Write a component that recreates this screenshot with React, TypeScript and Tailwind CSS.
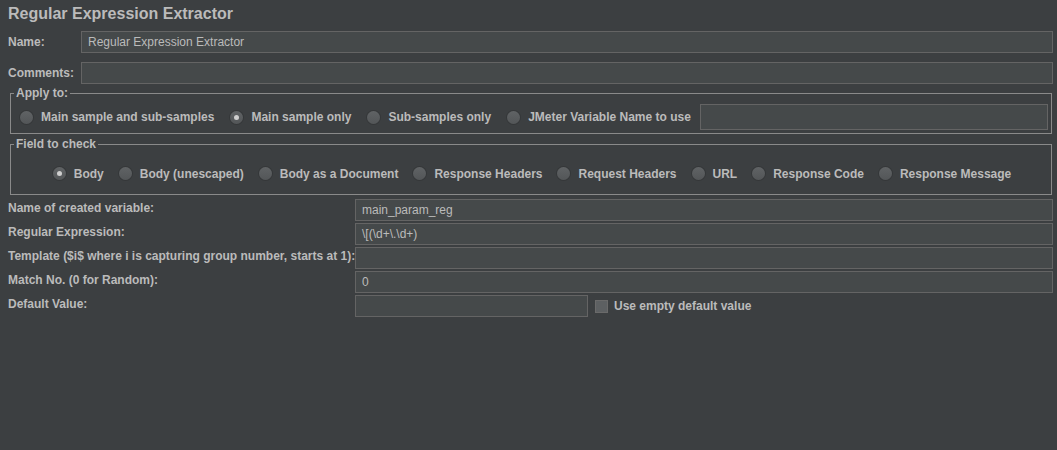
import React from 'react'

const font = { fontFamily: '"Liberation Sans", Arial, sans-serif' }

function Radio({ checked = false }: { checked?: boolean }) {
  return (
    <span className="relative inline-flex h-[13px] w-[13px] shrink-0 items-center justify-center rounded-full bg-gradient-to-b from-[#606365] to-[#535658] shadow-[0_0_0_1px_rgba(0,0,0,0.12)]">
      {checked ? <span className="h-[5px] w-[5px] rounded-full bg-[#cfcfcf]" /> : null}
    </span>
  )
}

function RadioItem({ label, checked }: { label: string; checked?: boolean }) {
  return (
    <label className="flex items-center gap-2 whitespace-nowrap">
      <Radio checked={checked} />
      <span>{label}</span>
    </label>
  )
}

function TextBox({ value = '', className = '' }: { value?: string; className?: string }) {
  return (
    <div className={`flex h-[22px] items-center border border-[#646464] bg-[#45494a] px-[6px] font-normal text-[12px] text-[#bbbbbb] ${className}`}>
      {value}
    </div>
  )
}

const applyTo = [
  { label: 'Main sample and sub-samples' },
  { label: 'Main sample only', checked: true },
  { label: 'Sub-samples only' },
  { label: 'JMeter Variable Name to use' },
]

const fields = [
  { label: 'Body', checked: true },
  { label: 'Body (unescaped)' },
  { label: 'Body as a Document' },
  { label: 'Response Headers' },
  { label: 'Request Headers' },
  { label: 'URL' },
  { label: 'Response Code' },
  { label: 'Response Message' },
]

const rows = [
  { label: 'Name of created variable:', value: 'main_param_reg' },
  { label: 'Regular Expression:', value: '\\[(\\d+\\.\\d+)' },
  { label: 'Template ($i$ where i is capturing group number, starts at 1):', value: '' },
  { label: 'Match No. (0 for Random):', value: '0' },
]

export default function App() {
  return (
    <div style={font} className="h-[450px] w-[1057px] overflow-hidden bg-[#3c3f41] text-[12px] font-bold leading-[14px] text-[#bbbbbb]">
      <div className="pl-[8px] pt-[4px] text-[16px] leading-[20px]">Regular Expression Extractor</div>

      <div className="mt-[7px] flex items-center pl-[8px] pr-[4px]">
        <span className="w-[73px]">Name:</span>
        <TextBox value="Regular Expression Extractor" className="flex-1" />
      </div>
      <div className="mt-[9px] flex items-center pl-[8px] pr-[4px]">
        <span className="w-[73px]">Comments:</span>
        <TextBox className="flex-1" />
      </div>

      <fieldset className="ml-[10px] mr-[5px] mt-[2px] border border-[#8a8a8a] pb-[3px]">
        <legend className="ml-[3px] px-[2px]">Apply to:</legend>
        <div className="mt-[4px] flex h-[26px] items-center gap-[16px] pl-[9px] pr-[3px]">
          {applyTo.map((a) => (
            <RadioItem key={a.label} label={a.label} checked={a.checked} />
          ))}
          <div className="ml-[-7px] h-[26px] flex-1 border border-[#646464] bg-[#45494a]" />
        </div>
      </fieldset>

      <fieldset className="ml-[10px] mr-[5px] mt-[3px] border border-[#8a8a8a] pb-[3px]">
        <legend className="ml-[3px] px-[2px]">Field to check</legend>
        <div className="mt-[5px] flex h-[35px] items-center justify-center gap-[15px] pl-[2px]">
          {fields.map((f) => (
            <RadioItem key={f.label} label={f.label} checked={f.checked} />
          ))}
        </div>
      </fieldset>

      <div className="mt-[4px] flex flex-col gap-[2px] pl-[8px] pr-[4px]">
        {rows.map((r) => (
          <div key={r.label} className="flex items-center">
            <span className="w-[347px] whitespace-nowrap pb-[5px]">{r.label}</span>
            <TextBox value={r.value} className="flex-1" />
          </div>
        ))}
        <div className="flex items-center">
          <span className="w-[347px] pb-[5px]">Default Value:</span>
          <TextBox className="w-[233px]" />
          <span className="ml-[7px] h-[13px] w-[13px] border border-[#6a6a6a] bg-[#5d6062]" />
          <span className="ml-[6px]">Use empty default value</span>
        </div>
      </div>
    </div>
  )
}
